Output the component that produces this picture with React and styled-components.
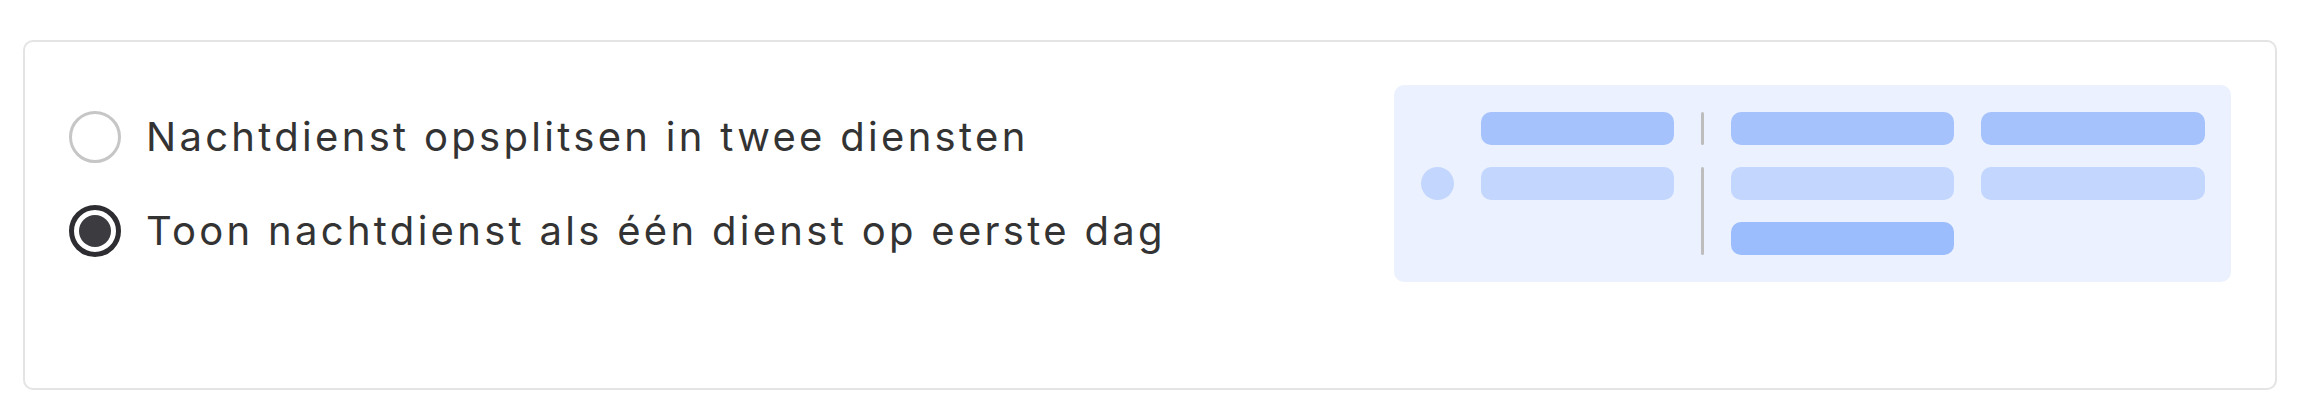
import React from 'react';
import styled, { createGlobalStyle } from 'styled-components';

const GlobalStyle = createGlobalStyle`
html, body {
    margin: 0;
    padding: 0;
    background: #fff;
}
body {
    font-family: Inter, "Noto Sans", sans-serif;
    color: #333;
}
`;

const Page = styled.div`
padding: 40px 22px 29px 23px;
`;

const Card = styled.section`
box-sizing: border-box;
height: 350px;
border: 2px solid #e4e4e4;
border-radius: 10px;
padding: 43px 44px;
background: #fff;
`;

const Row = styled.div`
display: flex;
justify-content: space-between;
align-items: center;
`;

const Options = styled.div`
display: flex;
flex-direction: column;
gap: 42px;
`;

const Option = styled.label`
display: flex;
align-items: center;
gap: 25px;
font-size: 40px;
letter-spacing: 3.3px;
line-height: 52px;
color: #333;
cursor: pointer;
`;

const Radio = styled.span`
box-sizing: border-box;
flex: none;
width: 52px;
height: 52px;
border-radius: 50%;
border: ${p => (p.$checked ? '5px solid #2e2e32' : '3px solid #c6c6c6')};
display: flex;
align-items: center;
justify-content: center;
&::after {
    content: '';
    display: ${p => (p.$checked ? 'block' : 'none')};
    width: 32px;
    height: 32px;
    border-radius: 50%;
    background: #3b3b40;
}
`;

const Preview = styled.div`
display: grid;
grid-template-columns: 33px 193px 3px 223px 224px;
grid-template-rows: repeat(3, 33px);
column-gap: 27px;
row-gap: 22px;
padding: 27px;
width: 837px;
box-sizing: border-box;
background: #ebf1fe;
border-radius: 10px;
`;

const Dot = styled.span`
grid-column: 1;
grid-row: 2;
border-radius: 50%;
background: #c3d6fe;
`;

const tones = {
    head: '#a5c2fd',
    light: '#c2d6fe',
    strong: '#9bbcfd',
};

const Bar = styled.span`
grid-column: ${p => p.$col};
grid-row: ${p => p.$row};
border-radius: 10px;
background: ${p => tones[p.$tone]};
`;

const Divider = styled.span`
grid-column: 3;
grid-row: ${p => p.$rows};
background: #bdbdbd;
border-radius: 2px;
`;

const options = [
    { label: 'Nachtdienst opsplitsen in twee diensten', checked: false },
    { label: 'Toon nachtdienst als één dienst op eerste dag', checked: true },
];

const App = () => {
    return (
        <>
            <GlobalStyle />
            <Page>
                <Card>
                    <Row>
                        <Options>
                            {options.map(o => (
                                <Option key={o.label}>
                                    <Radio $checked={o.checked} />
                                    {o.label}
                                </Option>
                            ))}
                        </Options>
                        <Preview>
                            <Dot />
                            <Bar $col={2} $row={1} $tone="head" />
                            <Bar $col={2} $row={2} $tone="light" />
                            <Divider $rows="1" />
                            <Divider $rows="2 / 4" />
                            <Bar $col={4} $row={1} $tone="head" />
                            <Bar $col={4} $row={2} $tone="light" />
                            <Bar $col={4} $row={3} $tone="strong" />
                            <Bar $col={5} $row={1} $tone="head" />
                            <Bar $col={5} $row={2} $tone="light" />
                        </Preview>
                    </Row>
                </Card>
            </Page>
        </>
    );
};

export default App;
